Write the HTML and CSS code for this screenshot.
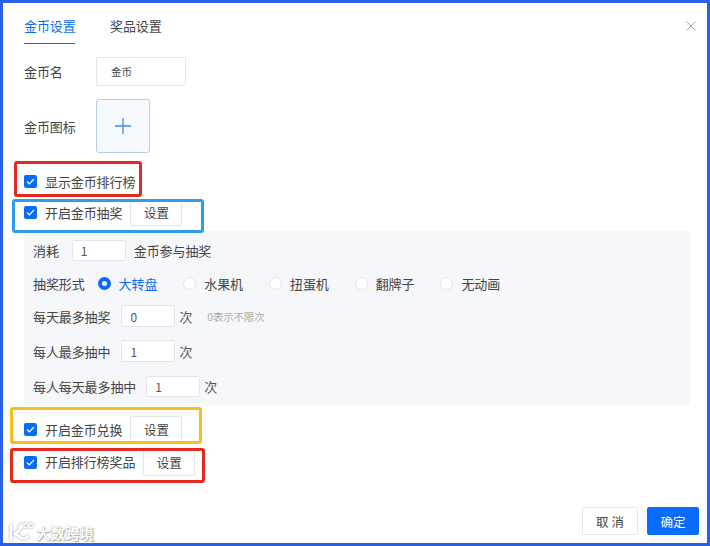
FILE: index.html
```html
<!DOCTYPE html>
<html lang="zh-CN">
<head>
<meta charset="utf-8">
<title>金币设置</title>
<link rel="stylesheet" href="styles.css">
</head>
<body>
<div class="dialog">
  <div class="tabs">
    <div class="tab active">金币设置</div>
    <div class="tab">奖品设置</div>
    <svg class="close" width="10" height="10" viewBox="0 0 10 10"><path d="M.5.5l9 9M9.500.5l-9 9" stroke="#a8a8a8" fill="none"/></svg>
  </div>
  <div class="main">
    <div class="row name-row">
      <span class="label">金币名</span>
      <input class="input name-input" value="金币" readonly>
    </div>
    <div class="row upload-row">
      <span class="label">金币图标</span>
      <div class="upload">
        <svg width="16" height="16" viewBox="0 0 16 16"><path d="M8 0v16M0 8h16" stroke="#3d8bf2" stroke-width="1.300" fill="none"/></svg>
      </div>
    </div>
    <div class="row check-row first-check">
      <span class="check"><svg width="9" height="7" viewBox="0 0 9 7"><path d="M1 3.500l2.300 2.300L8 1" stroke="#fff" stroke-width="1.200" fill="none"/></svg></span>
      <span>显示金币排行榜</span>
    </div>
    <div class="row check-row lottery-check">
      <span class="check"><svg width="9" height="7" viewBox="0 0 9 7"><path d="M1 3.500l2.300 2.300L8 1" stroke="#fff" stroke-width="1.200" fill="none"/></svg></span>
      <span>开启金币抽奖</span>
      <button class="btn set-btn">设置</button>
    </div>
    <div class="panel">
      <div class="row p-cost">
        <span>消耗</span>
        <input class="input num cost-input" value="1" readonly>
        <span class="after">金币参与抽奖</span>
      </div>
      <div class="row p-radio">
        <span>抽奖形式</span>
        <span class="radio on"></span><span class="radio-text on-text">大转盘</span>
        <span class="radio"></span><span class="radio-text">水果机</span>
        <span class="radio"></span><span class="radio-text">扭蛋机</span>
        <span class="radio"></span><span class="radio-text">翻牌子</span>
        <span class="radio"></span><span class="radio-text">无动画</span>
      </div>
      <div class="row p-day">
        <span>每天最多抽奖</span>
        <input class="input num" value="0" readonly>
        <span class="unit">次</span>
        <span class="hint">0表示不限次</span>
      </div>
      <div class="row p-person">
        <span>每人最多抽中</span>
        <input class="input num" value="1" readonly>
        <span class="unit">次</span>
      </div>
      <div class="row p-daily">
        <span>每人每天最多抽中</span>
        <input class="input num" value="1" readonly>
        <span class="unit">次</span>
      </div>
    </div>
    <div class="row check-row exchange-check">
      <span class="check"><svg width="9" height="7" viewBox="0 0 9 7"><path d="M1 3.500l2.300 2.300L8 1" stroke="#fff" stroke-width="1.200" fill="none"/></svg></span>
      <span>开启金币兑换</span>
      <button class="btn set-btn">设置</button>
    </div>
    <div class="row check-row rank-check">
      <span class="check"><svg width="9" height="7" viewBox="0 0 9 7"><path d="M1 3.500l2.300 2.300L8 1" stroke="#fff" stroke-width="1.200" fill="none"/></svg></span>
      <span class="rank-text">开启排行榜奖品</span>
      <button class="btn set-btn">设置</button>
    </div>
  </div>
  <div class="footer">
    <button class="btn cancel">取 消</button>
    <button class="btn ok">确定</button>
  </div>
</div>
<div class="mark mark-red1"></div>
<div class="mark mark-blue"></div>
<div class="mark mark-yellow"></div>
<div class="mark mark-red2"></div>
<div class="watermark">
  <svg width="28" height="22" viewBox="0 0 28 22"><path d="M4 4v14M14 4c-1 5-4 7-7 8 3 0 5 3 7 4 3 1 6 0 7-2" stroke="#fff" stroke-width="2.500" fill="none" stroke-linecap="round"/><circle cx="14" cy="4" r="2.200" stroke="#fff" stroke-width="1.200" fill="none"/><circle cx="19" cy="3.500" r="2.200" stroke="#fff" stroke-width="1.200" fill="none"/><circle cx="24" cy="3.500" r="2.200" stroke="#fff" stroke-width="1.200" fill="none"/></svg>
  <span>大数跨境</span>
</div>
</body>
</html>
```
FILE: styles.css
```css
* { box-sizing: border-box; }
html, body { margin: 0; padding: 0; }
body {
  width: 710px;
  height: 546px;
  overflow: hidden;
  position: relative;
  background: #fff;
  font-family: "Noto Sans CJK SC", "Liberation Sans", sans-serif;
  font-size: 13px;
  color: #444;
}
.dialog {
  width: 710px;
  height: 546px;
  border: 3px solid #2a5fe8;
  border-bottom-width: 3px;
  display: flex;
  flex-direction: column;
  background: #fff;
}
.tabs {
  height: 41px;
  padding-left: 21px;
  padding-right: 11px;
  display: flex;
  align-items: stretch;
  gap: 35px;
}
.tab {
  width: 51px;
  white-space: nowrap;
  line-height: 46px;
  letter-spacing: -0.1px;
}
.tab.active {
  color: #0a6cf0;
  border-bottom: 1.500px solid #0a6cf0;
}
.close { margin-left: auto; align-self: center; margin-top: 5px; }
.main {
  padding: 0 17px 0 21px;
}
.row { display: flex; align-items: center; white-space: nowrap; letter-spacing: -0.1px; }
.input {
  display: block;
  border: 1px solid #e3e5ea;
  border-radius: 2px;
  background: #fff;
  outline: none;
  font-family: inherit;
  color: #444;
  padding: 0;
}
.name-row { margin-top: 13px; height: 29px; }
.label { width: 72px; }
.name-input { width: 90px; height: 29px; padding-left: 14px; font-size: 10.500px; }
.upload-row { margin-top: 13px; height: 54px; }
.upload {
  width: 54px;
  height: 54px;
  border: 1px solid #b5cdf0;
  border-radius: 3px;
  background: #f6f9fd;
  display: flex;
  align-items: center;
  justify-content: center;
}
.check-row { gap: 8px; }
.check {
  width: 13px;
  height: 13px;
  border-radius: 2px;
  background: #0a6cf5;
  display: flex;
  align-items: center;
  justify-content: center;
  flex: none;
}
.first-check { margin-top: 15px; height: 26px; }
.lottery-check { margin-top: 5px; height: 27px; }
.exchange-check { margin-top: 10px; height: 27px; }
.rank-check { margin-top: 5px; height: 28px; }
.rank-text { margin-top: -2px; }
.btn {
  font-family: inherit;
  font-size: 12.500px;
  color: #444;
  background: #fff;
  border: 1px solid #e3e5ea;
  border-radius: 2px;
  padding: 0;
  height: 100%;
  width: 52px;
}
.set-btn { margin-left: 0; }
.check-row .set-btn { width: 52px; }
.panel {
  margin-top: 5px;
  height: 175px;
  background: #f6f7fb;
  padding: 9px 9px 0;
}
.num { width: 54px; height: 100%; padding-left: 8px; font-size: 12px; color: #555; }
.p-cost { height: 21px; gap: 13px; }
.p-cost .num { margin-left: 0; }
.cost-input { margin-left: -1px; }
.after { margin-left: -5px; }
.p-radio { margin-top: 11px; height: 22px; }
.radio {
  width: 13px;
  height: 13px;
  border-radius: 50%;
  background: #fff;
  border: 1px solid #e0e2e6;
  margin-left: 26px;
  flex: none;
}
.radio.on {
  border: 4px solid #0a6cf5;
  margin-left: 13px;
}
.radio-text { margin-left: 8px; }
.on-text { color: #0a6cf0; }
.p-day { margin-top: 11px; height: 22px; gap: 4px; }
.p-day .num, .p-person .num { margin-left: 7px; }
.p-person { margin-top: 13px; height: 22px; gap: 4px; }
.p-daily { margin-top: 14px; height: 21px; gap: 4px; }
.p-daily .num { margin-left: 6px; }
.unit { color: #555; }
.hint { font-size: 10.500px; color: #aaa; margin-left: 11px; letter-spacing: -0.2px; }
.footer {
  margin-top: auto;
  padding: 0 8px 8px 0;
  display: flex;
  justify-content: flex-end;
  gap: 9px;
}
.cancel { width: 56px; height: 28px; }
.ok {
  width: 52px;
  height: 28px;
  background: #0a6cff;
  border-color: #0a6cff;
  color: #fff;
}
.mark {
  position: absolute;
  border: 3px solid;
  border-radius: 3px;
  pointer-events: none;
}
.mark-red1 { left: 14px; top: 161px; width: 128px; height: 36px; border-color: #e5281e; }
.mark-blue { left: 12px; top: 199px; width: 192px; height: 34px; border-color: #2f9ee8; }
.mark-yellow { left: 10px; top: 407px; width: 192px; height: 37px; border-color: #fbbc1e; }
.mark-red2 { left: 10px; top: 448px; width: 195px; height: 35px; border-color: #e5281e; }
.watermark {
  position: absolute;
  left: 7px;
  top: 522px;
  display: flex;
  align-items: center;
  gap: 1px;
  color: #fff;
  font-size: 14.500px;
  font-weight: 700;
  line-height: 20px;
  text-shadow: 0 0 1px #999, 1px 1px 1px #aaa;
}
.watermark svg { filter: drop-shadow(0 0 1px #999); }
```
